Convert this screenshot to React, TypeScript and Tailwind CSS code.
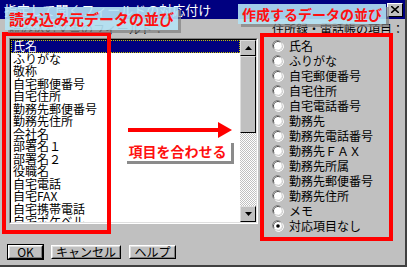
import React from 'react';

const leftItems = [
  '氏名',
  'ふりがな',
  '敬称',
  '自宅郵便番号',
  '自宅住所',
  '勤務先郵便番号',
  '勤務先住所',
  '会社名',
  '部署名１',
  '部署名２',
  '役職名',
  '自宅電話',
  '自宅FAX',
  '自宅携帯電話',
  '自宅ポケベル',
];

const rightItems = [
  '氏名',
  'ふりがな',
  '自宅郵便番号',
  '自宅住所',
  '自宅電話番号',
  '勤務先',
  '勤務先電話番号',
  '勤務先ＦＡＸ',
  '勤務先所属',
  '勤務先郵便番号',
  '勤務先住所',
  'メモ',
  '対応項目なし',
];

function Radio({ checked }: { checked: boolean }) {
  return (
    <svg width="12" height="12" viewBox="0 0 12 12" className="shrink-0">
      <path d="M1.5 8.5 A5 5 0 0 1 8.5 1.5" stroke="#808080" strokeWidth="1" fill="none" />
      <path d="M2.5 8 A4 4 0 0 1 8 2.5" stroke="#000" strokeWidth="1" fill="none" />
      <circle cx="6" cy="6" r="4" fill="#fff" />
      <path d="M10.5 3.5 A5 5 0 0 1 3.5 10.5" stroke="#fff" strokeWidth="1" fill="none" />
      <path d="M9.5 4 A4 4 0 0 1 4 9.5" stroke="#dfdfdf" strokeWidth="1" fill="none" />
      {checked && <circle cx="6" cy="6" r="1.8" fill="#000" />}
    </svg>
  );
}

function Win95Button({ label, isDefault }: { label: string; isDefault?: boolean }) {
  return (
    <div className={isDefault ? 'border border-black' : 'border border-transparent'}>
      <div className="border border-t-white border-l-white border-r-black border-b-black">
        <div className="h-[12px] flex items-center justify-center border border-t-[#dfdfdf] border-l-[#dfdfdf] border-r-[#808080] border-b-[#808080] text-[12px] leading-none text-black whitespace-nowrap">
          {label}
        </div>
      </div>
    </div>
  );
}

function ScrollArrow({ up }: { up: boolean }) {
  return (
    <div className="w-[16px] h-[16px] bg-[#c0c0c0] border border-t-[#dfdfdf] border-l-[#dfdfdf] border-r-black border-b-black flex items-center justify-center shrink-0">
      <svg width="7" height="4" viewBox="0 0 7 4">
        {up ? <polygon points="3.5,0 7,4 0,4" fill="#000" /> : <polygon points="0,0 7,0 3.5,4" fill="#000" />}
      </svg>
    </div>
  );
}

export default function App() {
  return (
    <div
      className="w-[407px] h-[267px] relative overflow-hidden bg-[#c0c0c0]"
      style={{ fontFamily: '"Noto Sans CJK JP", "Noto Sans", sans-serif' }}
    >
      <div className="h-full flex flex-col border-r-2 border-b-2 border-r-[#404040] border-b-[#404040]">
        {/* title bar */}
        <div className="h-[19px] bg-[#000080] flex items-center justify-between pl-[4px] pr-[2px] shrink-0">
          <span className="text-white text-[13px] leading-none">指定して開くフィールドの対応付け</span>
          <div className="w-[16px] h-[14px] bg-[#c0c0c0] border border-t-white border-l-white border-r-black border-b-black flex items-center justify-center">
            <svg width="8" height="7" viewBox="0 0 8 7">
              <path d="M0 0 L8 7 M8 0 L0 7" stroke="#000" strokeWidth="1.6" />
            </svg>
          </div>
        </div>

        {/* body */}
        <div className="flex flex-1 pt-[3px]">
          <div className="w-[258px] pl-[9px] flex flex-col shrink-0">
            <div className="h-[16px] text-[12px] leading-[14px] text-black whitespace-nowrap">読み込む文書のフィールド：</div>
            <div className="w-[249px] h-[186px] border border-t-[#808080] border-l-[#808080] border-r-white border-b-white">
              <div className="h-full flex border border-t-black border-l-black border-r-[#dfdfdf] border-b-[#dfdfdf] bg-white">
                <div className="flex-1 flex flex-col overflow-hidden">
                  {leftItems.map((item, i) => (
                    <div
                      key={item}
                      className={
                        'h-[12.5px] shrink-0 flex items-center pl-[2px] text-[12px] leading-none whitespace-nowrap ' +
                        (i === 0 ? 'bg-[#000080] text-white outline-1 outline-dotted outline-[#c0c000] -outline-offset-1' : 'text-black')
                      }
                    >
                      {item}
                    </div>
                  ))}
                </div>
                <div className="w-[16px] flex flex-col shrink-0">
                  <ScrollArrow up />
                  <div className="h-[77px] bg-[#c0c0c0] border border-t-[#dfdfdf] border-l-[#dfdfdf] border-r-black border-b-black shrink-0" />
                  <div className="flex-1 bg-[repeating-conic-gradient(#c0c0c0_0_25%,#ffffff_0_50%)] bg-[length:2px_2px]" />
                  <ScrollArrow up={false} />
                </div>
              </div>
            </div>
          </div>

          <div className="flex-1 flex flex-col pl-[14px]">
            <div className="h-[16px] text-[12px] leading-[14px] text-black whitespace-nowrap">住所録・電話帳の項目：</div>
            <div className="flex flex-col">
              {rightItems.map((item, i) => (
                <div key={item} className="h-[15px] flex items-center gap-[5px]">
                  <Radio checked={i === rightItems.length - 1} />
                  <span className="text-[12px] leading-none text-black whitespace-nowrap">{item}</span>
                </div>
              ))}
            </div>
          </div>
        </div>

        {/* buttons */}
        <div className="flex gap-[6px] pl-[7px] pb-[5px]">
          <div className="w-[37px]">
            <Win95Button label="OK" isDefault />
          </div>
          <div className="w-[72px]">
            <Win95Button label="キャンセル" />
          </div>
          <div className="w-[49px]">
            <Win95Button label="ヘルプ" />
          </div>
        </div>
      </div>

      {/* annotations */}
      <div className="absolute left-[2px] top-[32px] w-[109px] h-[202px] border-[4px] border-[#ff0000]" />
      <div className="absolute left-[260px] top-[33px] w-[133px] h-[208px] border-[4px] border-[#ff0000]" />

      <div className="absolute left-[5px] top-[7px] h-[23px] px-[4px] flex items-center bg-[#b4e2f4]/90 shadow-[3px_3px_0_rgba(128,128,128,0.7)]">
        <span className="text-[15px] font-bold text-[#ff1010] leading-none whitespace-nowrap">読み込み元データの並び</span>
      </div>
      <div className="absolute left-[238px] top-[4px] h-[20px] px-[4px] flex items-center bg-[#b4e2f4]/90 shadow-[3px_3px_0_rgba(128,128,128,0.7)]">
        <span className="text-[14px] font-bold text-[#ff1010] leading-none whitespace-nowrap">作成するデータの並び</span>
      </div>

      <svg className="absolute left-[128px] top-[121px]" width="104" height="18" viewBox="0 0 104 18">
        <rect x="0" y="7" width="92" height="4" fill="#ff0000" />
        <polygon points="90,1 104,9 90,17" fill="#ff0000" />
      </svg>

      <div className="absolute left-[124px] top-[140px] w-[107px] h-[21px] flex items-center justify-center bg-white shadow-[3px_3px_0_rgba(110,110,110,0.8)]">
        <span className="text-[14px] font-bold text-[#ff1010] leading-none whitespace-nowrap">項目を合わせる</span>
      </div>
    </div>
  );
}
